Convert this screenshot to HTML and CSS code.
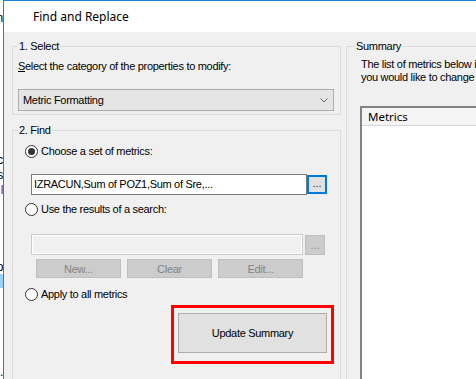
FILE: index.html
```html
<!DOCTYPE html>
<html>
	<head>
		<link rel="stylesheet" href="styles.css">
	</head>
	<body>
		<div class="desk">
			<!-- what shows of the window behind -->
			<div class="behind">
				<div class="peek peek-n">an</div>
				<div class="peek peek-c">c</div>
				<div class="peek peek-s">s</div>
				<div class="peek peek-l">l</div>
				<div class="peek peek-o">o</div>
				<div class="peek peek-sel"></div>
				<div class="peek peek-b">.</div>
			</div>

			<div class="window">
				<div class="titlebar">Find and Replace</div>

				<div class="client">
					<div class="left">
						<fieldset class="group select">
							<legend>1. Select</legend>
							<div class="hint"><u>S</u>elect the category of the properties to modify:</div>
							<div class="combo">
								<span>Metric Formatting</span>
								<svg width="8" height="5" viewBox="0 0 8 5"><polyline points="0.5,0.5 4,4 7.5,0.5" fill="none" stroke="#606060" stroke-width="1"/></svg>
							</div>
						</fieldset>

						<fieldset class="group find">
							<legend>2. Find</legend>

							<div class="radio-row first"><span class="radio checked"></span>Choose a set of metrics:</div>
							<div class="field-row">
								<div class="textbox">IZRACUN,Sum of POZ1,Sum of Sre,...</div>
								<div class="dots focus">...</div>
							</div>

							<div class="radio-row second"><span class="radio"></span>Use the results of a search:</div>
							<div class="field-row off">
								<div class="textbox disabled"></div>
								<div class="dots disabled">...</div>
							</div>
							<div class="btn-row">
								<div class="btn disabled">New...</div>
								<div class="btn disabled">Clear</div>
								<div class="btn disabled">Edit...</div>
							</div>

							<div class="radio-row third"><span class="radio"></span>Apply to all metrics</div>

							<div class="update-wrap">
								<div class="mark">
									<div class="btn update">Update Summary</div>
								</div>
							</div>
						</fieldset>
					</div>

					<fieldset class="group summary">
						<legend>Summary</legend>
						<div class="summary-text">
							The list of metrics below includes the metrics<br>
							you would like to change
						</div>
						<div class="list">
							<div class="list-head">Metrics</div>
							<div class="list-body"></div>
						</div>
					</fieldset>
				</div>
			</div>
		</div>
	</body>
</html>
```

FILE: styles.css
```css
html, body {
	margin: 0;
	padding: 0;
	width: 476px;
	height: 379px;
	overflow: hidden;
	background: white;
}

body {
	font-family: "Liberation Sans", Arial, sans-serif;
	font-size: 11px;
	letter-spacing: -0.3px;
	color: black;
}

.desk {
	display: flex;
	height: 379px;
}

/* Window behind */
.behind {
	width: 3px;
	flex: none;
	overflow: hidden;
	display: flex;
	flex-direction: column;
	background: white;
}
.peek {
	display: flex;
	justify-content: flex-end;
	white-space: nowrap;
	height: 14px;
	line-height: 14px;
	font-size: 12px;
}
.peek-n   { margin-top: 11px; }
.peek-c   { margin-top: 128px; }
.peek-s   { margin-top: 1px; }
.peek-l   { margin-top: 1px; color: #7a1f1f; }
.peek-o   { margin-top: 63px; }
.peek-sel { margin-top: 0px; height: 19px; background: #99d1ff; }
.peek-b   { margin-top: 77px; }

/* Dialog */
.window {
	flex: 1;
	border-left: 1px solid #1883d7;
	border-top: 1px solid #1883d7;
	display: flex;
	flex-direction: column;
	overflow: hidden;
}

.titlebar {
	height: 31px;
	line-height: 31px;
	flex: none;
	padding-left: 29px;
	background: white;
	font-family: "Noto Sans", "Open Sans", sans-serif;
	font-size: 12px;
	letter-spacing: 0;
}

.client {
	flex: 1;
	background: #f0f0f0;
	display: flex;
	gap: 5px;
	padding: 7px 0 0 8px;
}

.left {
	width: 329px;
	flex: none;
	display: flex;
	flex-direction: column;
}

.group {
	margin: 0;
	border: 1px solid #dcdcdc;
	min-width: 0;
}
.group legend {
	padding: 0 1px;
	line-height: 14px;
}

/* 1. Select */
.select {
	padding: 0 6px 3px 5px;
}
.hint {
	margin-top: 6px;
	line-height: 14px;
}
.combo {
	margin-top: 16px;
	height: 20px;
	border: 1px solid #acacac;
	background: #e5e5e5;
	display: flex;
	align-items: center;
	justify-content: space-between;
	padding: 0 5px 0 4px;
}
.combo svg {
	margin-top: 1px;
}

/* 2. Find */
.find {
	margin-top: 8px;
	flex: 1;
	padding: 0 6px 0 5px;
	border-bottom: none;
}

.radio-row {
	display: flex;
	align-items: center;
	height: 16px;
	margin-left: 7px;
}
.radio-row.first  { margin-top: 6px; }
.radio-row.second { margin-top: 6px; }
.radio-row.third  { margin-top: 8px; }

.radio {
	width: 11px;
	height: 11px;
	border: 1px solid #333333;
	border-radius: 50%;
	background: white;
	margin-right: 3px;
	display: flex;
	align-items: center;
	justify-content: center;
	flex: none;
}
.radio.checked::after {
	content: "";
	width: 7px;
	height: 7px;
	border-radius: 50%;
	background: #333333;
}

.field-row {
	display: flex;
	align-items: center;
	margin-left: 13px;
	margin-top: 15px;
	height: 21px;
}
.field-row.off {
	margin-top: 17px;
	gap: 2px;
}

.textbox {
	width: 272px;
	height: 19px;
	line-height: 19px;
	border: 1px solid #7a7a7a;
	background: white;
	padding-left: 2px;
	white-space: nowrap;
	overflow: hidden;
}
.textbox.disabled {
	width: 268px;
	border-color: #cccccc;
	background: #f0f0f0;
	box-shadow: inset 0 0 0 1px #ffffff;
}

.dots {
	width: 20px;
	height: 19px;
	box-sizing: border-box;
	display: flex;
	align-items: flex-end;
	justify-content: center;
	line-height: 14px;
	padding-bottom: 2px;
	letter-spacing: 0;
}
.dots.focus {
	border: 2px solid #0078d7;
	background: #e1e1e1;
	color: #3a2050;
}
.dots.disabled {
	height: 20px;
	border: 1px solid #bfbfbf;
	background: #cccccc;
	color: #8a8aa0;
}

.btn-row {
	display: flex;
	gap: 6px;
	margin-left: 18px;
	margin-top: 4px;
}

.btn {
	box-sizing: border-box;
	display: flex;
	align-items: center;
	justify-content: center;
	border: 1px solid #adadad;
	background: #e1e1e1;
}
.btn.disabled {
	width: 85px;
	height: 19px;
	border-color: #bfbfbf;
	background: #cccccc;
	color: #838383;
}

.update-wrap {
	display: flex;
	justify-content: flex-end;
	margin-top: 3px;
}
.mark {
	border: 3px solid #ff0000;
	padding: 5px 4px 8px 4px;
}
.btn.update {
	width: 149px;
	height: 40px;
}

/* Summary */
.summary {
	flex: none;
	width: 200px;
	padding: 0 0 0 8px;
	border-bottom: none;
	border-right: none;
}
.summary-text {
	margin: 5px 0 0 6px;
	line-height: 13px;
	white-space: nowrap;
}
.list {
	margin: 22px 0 0 5px;
	border-left: 2px solid #828282;
	border-top: 2px solid #828282;
	height: 300px;
	background: white;
}
.list-head {
	height: 17px;
	line-height: 17px;
	border-bottom: 1px solid #d5d5d5;
	background: #f5f5f5;
	padding-left: 6px;
	font-family: "Noto Sans", "Open Sans", sans-serif;
	font-size: 11.5px;
	letter-spacing: 0;
}
```
